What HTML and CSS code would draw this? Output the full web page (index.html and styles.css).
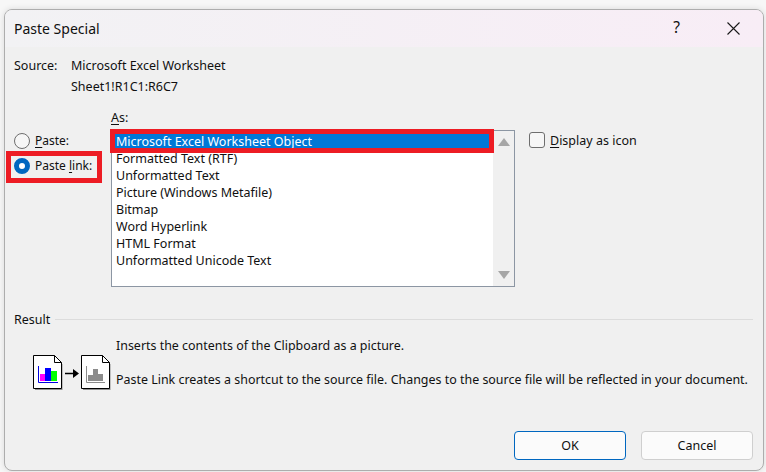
FILE: index.html
```html
<!DOCTYPE html>
<html lang="en">
<head>
<meta charset="utf-8">
<title>Paste Special</title>
<link rel="stylesheet" href="styles.css">
</head>
<body>
<div class="dialog">
  <header class="titlebar">
    <span class="title">Paste Special</span>
    <span class="help">?</span>
    <svg class="close" width="13" height="13" viewBox="0 0 13 13"><path d="M.5.5l12 12M12.5.5l-12 12" stroke="#1a1a1a" stroke-width="1.1" fill="none"/></svg>
  </header>
  <main class="content">
    <div class="source">
      <span>Source:</span><span>Microsoft Excel Worksheet</span>
      <span></span><span>Sheet1!R1C1:R6C7</span>
    </div>
    <div class="paste-area">
      <div class="radios">
        <label class="radio-row"><span class="radio"></span><span><u>P</u>aste:</span></label>
        <label class="radio-row"><span class="radio checked"></span><span>Paste <u>l</u>ink:</span></label>
        <div class="mark mark-radio"></div>
      </div>
      <div class="as-col">
        <div class="as-label"><u>A</u>s:</div>
        <div class="listbox">
          <ul class="items">
            <li class="selected"><span>Microsoft Excel Worksheet Object</span></li>
            <li>Formatted Text (RTF)</li>
            <li>Unformatted Text</li>
            <li>Picture (Windows Metafile)</li>
            <li>Bitmap</li>
            <li>Word Hyperlink</li>
            <li>HTML Format</li>
            <li>Unformatted Unicode Text</li>
          </ul>
          <div class="scrollbar">
            <svg width="12" height="8" viewBox="0 0 12 8"><path d="M6 0l6 8H0z" fill="#a6a6a6"/></svg>
            <svg width="12" height="8" viewBox="0 0 12 8"><path d="M0 0h12L6 8z" fill="#a6a6a6"/></svg>
          </div>
          <div class="mark mark-list"></div>
        </div>
      </div>
      <label class="check-row"><span class="checkbox"></span><span><u>D</u>isplay as icon</span></label>
    </div>
    <section class="result">
      <div class="legend"><span>Result</span><i class="rule"></i></div>
      <div class="result-body">
        <svg class="result-icon" width="80" height="36" viewBox="0 0 80 36">
          <path d="M2 9h27.500v26H2z" fill="#000" opacity=".4"/>
          <path d="M.5.500h21l7 7V33.500H.5z" fill="#fff" stroke="#000"/>
          <path d="M21.500.5v7h7" fill="none" stroke="#000"/>
          <path d="M5.500 11v16.500H25" fill="none" stroke="#0000e0"/>
          <rect x="7" y="19" width="5" height="7" fill="#ff00ff"/>
          <rect x="12" y="13" width="6" height="13" fill="#0000ff"/>
          <rect x="18" y="16" width="6" height="10" fill="#00ff00"/>
          <path d="M32 18.500h9" stroke="#000" stroke-width="1.500"/>
          <path d="M40 14l6 4.500-6 4.500z" fill="#000"/>
          <path d="M50 9h27.500v26H50z" fill="#000" opacity=".4"/>
          <path d="M48.500.500h21l7 7V33.500H48.500z" fill="#fff" stroke="#000"/>
          <path d="M69.500.5v7h7" fill="none" stroke="#000"/>
          <path d="M53.500 11v16.500H72" fill="none" stroke="#8c8c8c"/>
          <path d="M55 26v-6h5v-6h5v5h5v7z" fill="#8c8c8c"/>
        </svg>
        <div class="result-text">
          <p>Inserts the contents of the Clipboard as a picture.</p>
          <p>Paste Link creates a shortcut to the source file. Changes to the source file will be reflected in your document.</p>
        </div>
      </div>
    </section>
    <footer class="buttons">
      <button class="btn default">OK</button>
      <button class="btn">Cancel</button>
    </footer>
  </main>
</div>
</body>
</html>
```
FILE: styles.css
```css
* { box-sizing: border-box; }
html, body { margin: 0; height: 100%; }
body {
  background: #f7f7f7;
  padding: 9px 2px 1px 4px;
  overflow: hidden;
  font-family: "Noto Sans", "Open Sans", sans-serif;
  font-size: 12.5px;
  color: #101010;
}
.dialog {
  width: 760px;
  height: 462px;
  display: flex;
  flex-direction: column;
  background: #f0f0f0;
  border: 1px solid #adadad;
  border-radius: 8px;
  box-shadow: 0 0 6px rgba(0,0,0,.12);
  overflow: hidden;
}
.titlebar {
  height: 37px;
  flex: none;
  display: flex;
  align-items: center;
  padding: 0 23px 0 9px;
  background: linear-gradient(90deg, #f2f2f4, #f8edf6);
}
.title { font-size: 14px; flex: 1; }
.help { font-size: 15.500px; line-height: 20px; margin: 0 47px 4px 0; }
.close { display: block; }
.content {
  flex: 1;
  display: flex;
  flex-direction: column;
  padding: 8px 10px 10px 9px;
}
.source {
  display: grid;
  grid-template-columns: 57px 1fr;
  grid-auto-rows: 21px;
  line-height: 21px;
}
u { text-underline-offset: 2px; text-decoration-thickness: 1px; }
.paste-area { display: flex; margin-top: 12px; }
.radios {
  position: relative;
  width: 97px;
  padding-top: 19px;
  font-size: 12px;
}
.radio-row {
  display: flex;
  align-items: center;
  gap: 5px;
  height: 25px;
}
.radio {
  width: 16px;
  height: 16px;
  border-radius: 50%;
  border: 1px solid #6e6e6e;
  background: #f6f6f6;
}
.radio.checked { border: 5px solid #0067c0; background: #fff; }
.mark { position: absolute; border: 5px solid #ed1c24; pointer-events: none; }
.mark-radio { left: -8px; top: 42px; width: 96px; height: 32px; }
.as-col { width: 404px; flex: none; }
.as-label { height: 17px; line-height: 17px; margin-bottom: 4px; }
.listbox {
  position: relative;
  display: flex;
  height: 157px;
  border: 1px solid #8c96a3;
  background: #f0f0f0;
}
.items {
  list-style: none;
  margin: 0;
  padding: 2px 0 0 0;
  width: 381px;
  background: #fff;
}
.items li { height: 17px; line-height: 17px; padding-left: 4px; }
.items li.selected { background: #0078d7; color: #fff; }
.scrollbar {
  flex: 1;
  display: flex;
  flex-direction: column;
  justify-content: space-between;
  align-items: center;
  padding: 7px 0 7px 0;
}
.scrollbar svg { display: block; }
.mark-list { left: -2px; top: -2px; width: 384px; height: 24px; }
.check-row {
  display: flex;
  align-items: center;
  gap: 5px;
  margin: 21px 0 0 14px;
  height: 20px;
}
.checkbox {
  width: 16px;
  height: 16px;
  border: 1px solid #6e6e6e;
  border-radius: 3px;
  background: #f6f6f6;
}
.result { margin-top: 24px; }
.legend { display: flex; align-items: center; gap: 5px; height: 16px; }
.rule { flex: 1; height: 1px; background: #dcdcdc; }
.result-body { display: flex; gap: 3px; padding: 10px 0 0 19px; }
.result-icon { display: block; margin-top: 18px; flex: none; }
.result-text { font-size: 12.450px; }
.result-text p { margin: 0 0 17px; line-height: 17px; white-space: nowrap; }
.buttons {
  margin-top: auto;
  display: flex;
  justify-content: flex-end;
  gap: 15px;
}
.btn {
  width: 112px;
  height: 29px;
  font: inherit;
  color: inherit;
  background: #fbfbfb;
  border: 1px solid #cfcfcf;
  border-radius: 4px;
}
.btn.default { border-color: #0067c0; }
```
